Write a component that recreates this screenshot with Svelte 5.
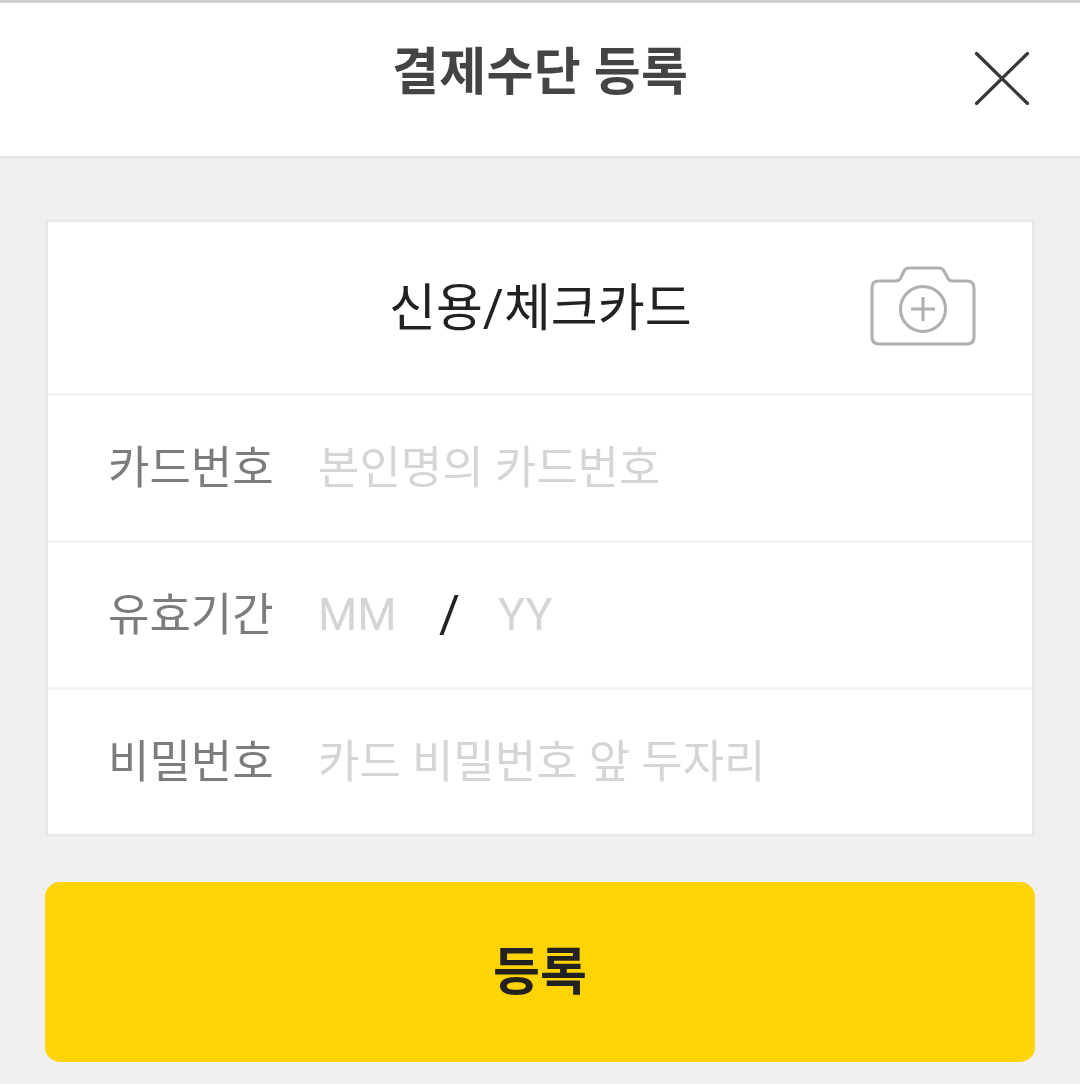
<script>
	const fields = [
		{ label: '카드번호', hint: '본인명의 카드번호' },
		{ label: '유효기간', expiry: true },
		{ label: '비밀번호', hint: '카드 비밀번호 앞 두자리' }
	]
</script>

<main>
	<header>
		<h1>결제수단 등록</h1>
		<button class="close" aria-label="닫기">
			<svg width="56" height="56" viewBox="0 0 56 56">
				<path d="M2.500 4.500 L53.500 54.500 M53.500 4.500 L2.500 54.500" stroke="#383838" stroke-width="3.2" stroke-linecap="round" fill="none" />
			</svg>
		</button>
	</header>

	<section class="body">
		<div class="card">
			<div class="title">
				<h2>신용/체크카드</h2>
				<svg class="camera" width="106" height="80" viewBox="0 0 106 80" fill="none" stroke="#b0b0b0" stroke-width="3.100">
					<path d="M9 15 H26 Q29 15 30.500 12.500 L34 5 Q35.500 2 39 2 H69 Q72.500 2 74 5 L78 12.500 Q79.500 15 82 15 H97 Q104 15 104 22 V71 Q104 78 97 78 H9 Q2 78 2 71 V22 Q2 15 9 15 Z" />
					<circle cx="53" cy="43" r="22.500" />
					<path d="M41 43 H65 M53 31 V55" />
				</svg>
			</div>
			{#each fields as f}
				<div class="row">
					<span class="label">{f.label}</span>
					{#if f.expiry}
						<span class="hint latin mm">MM</span>
						<span class="slash latin">/</span>
						<span class="hint latin">YY</span>
					{:else}
						<span class="hint">{f.hint}</span>
					{/if}
				</div>
			{/each}
		</div>
		<button class="submit"><span>등록</span></button>
	</section>
</main>

<style>
	:global(body) {
		margin: 0;
		background: #f0f0f0;
	}
	main {
		height: 1084px;
		overflow: hidden;
		background: #f0f0f0;
		font-family: "Roboto", "Noto Sans CJK KR", sans-serif;
	}
	header {
		position: relative;
		box-sizing: border-box;
		height: 158px;
		background: #fff;
		border-top: 3px solid #d2d2d2;
		border-bottom: 2px solid #e6e6e6;
		display: flex;
		align-items: center;
		justify-content: center;
	}
	h1, h2, .label, .hint, .slash, .submit span {
		will-change: transform;
	}
	h1 {
		margin: 0 0 23px;
		font-size: 51px;
		font-weight: 700;
		color: #444;
		letter-spacing: 0.3px;
	}
	.close {
		position: absolute;
		right: 50px;
		top: 46px;
		padding: 0;
		border: 0;
		background: none;
		display: block;
	}
	.close svg {
		display: block;
	}
	.body {
		padding: 61px 45px 0;
	}
	.card {
		background: #fff;
		border: 3px solid #e8e8e8;
	}
	.title {
		position: relative;
		box-sizing: border-box;
		height: 171px;
		padding-bottom: 8px;
		display: flex;
		align-items: center;
		justify-content: center;
	}
	h2 {
		margin: 0;
		font-size: 51px;
		font-weight: 400;
		color: #222;
	}
	.camera {
		position: absolute;
		right: 56px;
		top: 44px;
	}
	.row {
		box-sizing: border-box;
		height: 147px;
		padding-bottom: 8px;
		border-top: 3px solid #f3f3f3;
		display: flex;
		align-items: center;
		padding-left: 60px;
		font-size: 45px;
	}
	.label {
		width: 210px;
		color: #7c7c7c;
	}
	.hint {
		color: #d5d5d5;
	}
	.latin {
		margin-top: 6px;
	}
	.mm {
		margin-right: 42px;
	}
	.slash {
		margin-right: 38px;
		color: #222;
		font-size: 51px;
	}
	.submit {
		display: block;
		width: 100%;
		height: 180px;
		margin-top: 45px;
		padding: 0 0 8px;
		border: 0;
		border-radius: 15px;
		background: #ffd405;
		color: #222;
		font-family: inherit;
		font-size: 51px;
		font-weight: 700;
	}
	.submit span {
		display: block;
	}
</style>
